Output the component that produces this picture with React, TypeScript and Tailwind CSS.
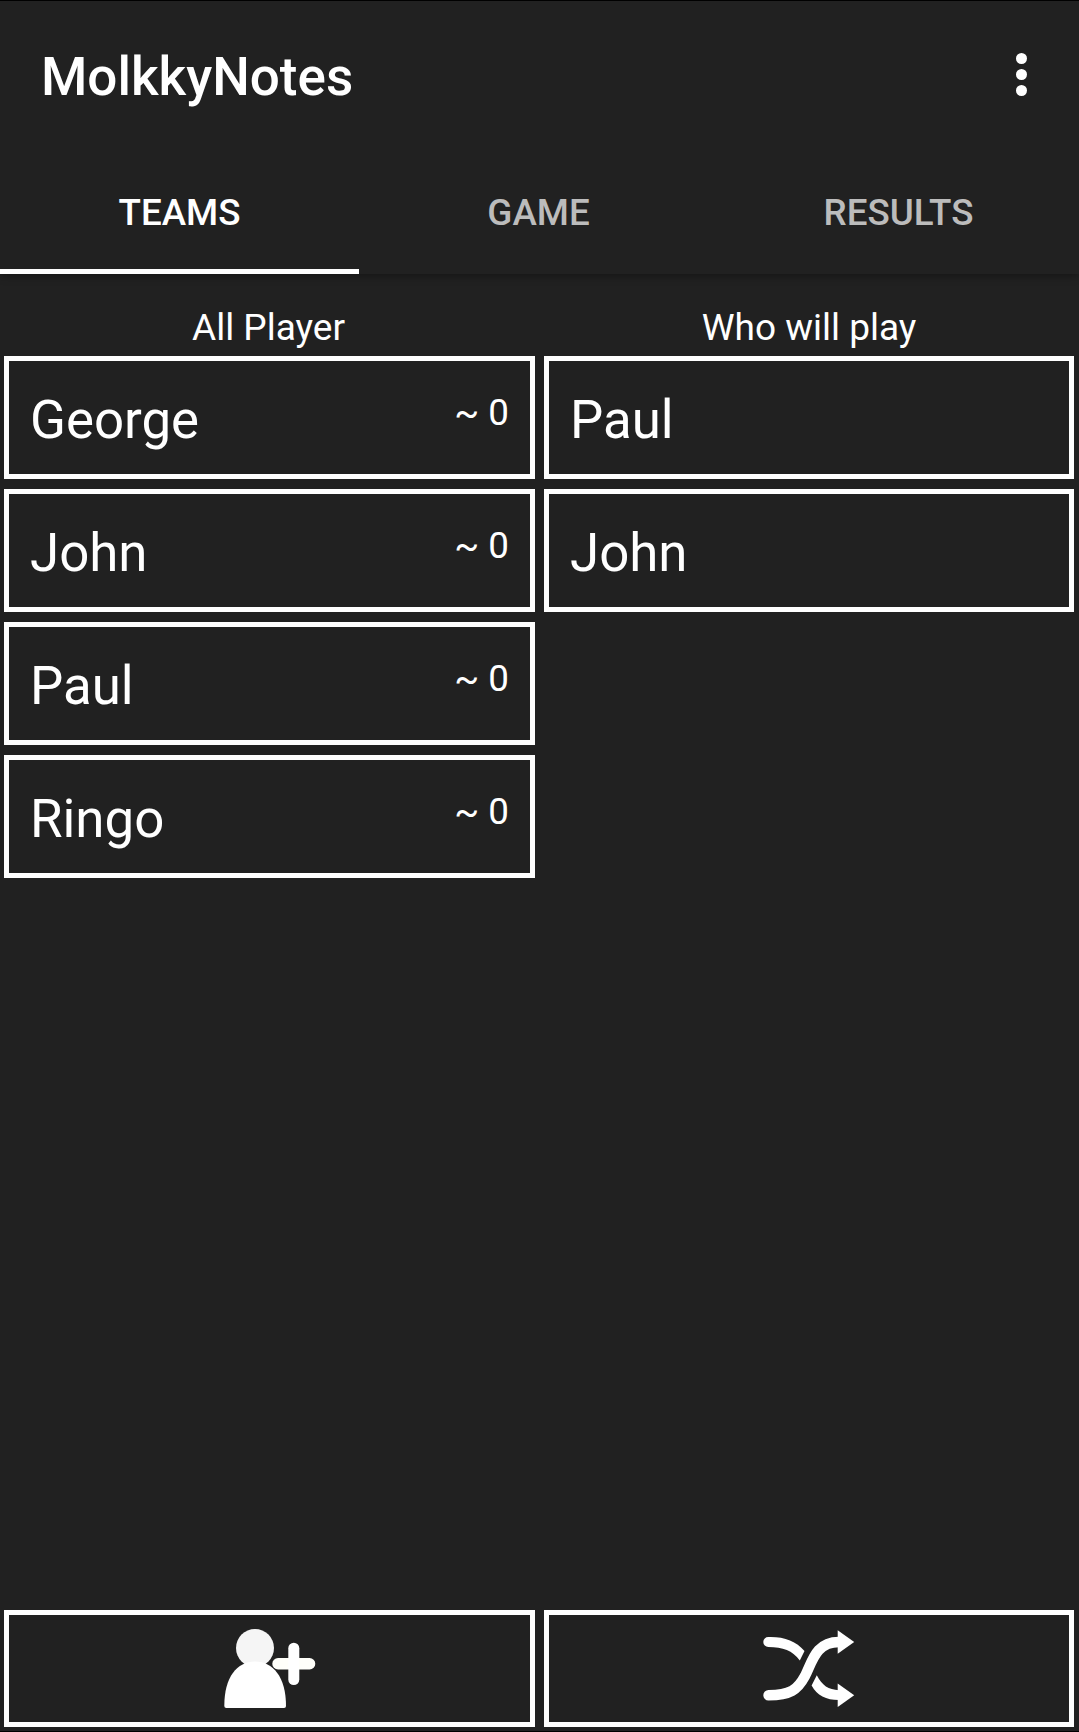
const allPlayers = ["George", "John", "Paul", "Ringo"];
const playing = ["Paul", "John"];
const tabs = ["TEAMS", "GAME", "RESULTS"];

function PlayerCard({ name, score }: { name: string; score?: string }) {
  return (
    <div className="flex h-[123px] items-center justify-between border-[5px] border-white px-[21px]">
      <span className="pt-[4px] text-[52.8px] leading-[60px]">{name}</span>
      {score && <span className="pb-[10px] text-[36.75px] leading-[44px]">{score}</span>}
    </div>
  );
}

function AddPlayerIcon() {
  return (
    <svg width="92" height="80" viewBox="0 0 92 80" aria-hidden="true">
      <circle cx="31" cy="19" r="19" fill="#f5f5f5" />
      <path
        d="M0.3 77C0.3 48 13 32.5 31 32.5S62 48 62 77Q62 79 60 79H2.3Q0.3 79 0.3 77Z"
        fill="#fff"
      />
      <rect x="48.3" y="29" width="43" height="11.5" rx="5.75" fill="#fffffa" />
      <rect x="64.3" y="13.7" width="11" height="42.3" rx="5.5" fill="#fff" />
    </svg>
  );
}

function ShuffleIcon() {
  return (
    <svg width="92" height="80" viewBox="0 0 92 80" fill="#fff" aria-hidden="true">
      <path
        d="M5.5 65.2C27 65.2 34.5 60 42 46C49.5 31 53 12 76 12"
        fill="none"
        stroke="#fff"
        strokeWidth="10.4"
        strokeLinecap="round"
      />
      <path d="M5.3 7C21 6.5 33 11 41.5 21L36.8 30.5C29.5 20.5 20 17 5.3 17A5 5 0 0 1 5.3 7Z" />
      <path d="M53.8 45.3C59 55.5 65.5 59.8 76 60.2V70C63 70 54 65.5 48.6 55.5Z" />
      <path d="M74.7 0.3L91.2 12L74.7 23.7Z" />
      <path d="M74.7 53.5L91.2 65.2L74.7 77Z" />
    </svg>
  );
}

export default function App() {
  return (
    <div className="flex h-[1732px] w-[1079px] flex-col border-y border-black bg-[#212121] font-['Roboto',sans-serif] text-white">
      <header className="h-[273px] shrink-0 bg-[#212121] shadow-[0_2px_8px_rgba(0,0,0,0.35)]">
        <div className="flex h-[152px] items-center justify-between pr-[52px] pl-[40px]">
          <h1 className="pb-px pl-px text-[53px] leading-[60px] font-medium">MolkkyNotes</h1>
          <button aria-label="More options" className="flex flex-col gap-[5px] pb-[6px]">
            <span className="size-[11px] rounded-full bg-white" />
            <span className="size-[11px] rounded-full bg-white" />
            <span className="size-[11px] rounded-full bg-white" />
          </button>
        </div>
        <nav className="grid h-[121px] grid-cols-[359px_359px_361px]">
          {tabs.map((tab, i) => (
            <button
              key={tab}
              className={
                i === 0
                  ? "border-b-[5px] border-white pt-[4px] text-[36.75px] leading-[44px] font-medium"
                  : "border-b-[5px] border-transparent pt-[4px] text-[36.75px] leading-[44px] font-medium text-[#bcbcbc]"
              }
            >
              {tab}
            </button>
          ))}
        </nav>
      </header>

      <main className="grid flex-1 grid-cols-[531px_530px] gap-x-[9px] pt-[32px] pl-[4px]">
        <section>
          <h2 className="h-[50px] pr-[2px] text-center text-[37px] leading-[44px]">All Player</h2>
          <div className="flex flex-col gap-[10px]">
            {allPlayers.map((name) => (
              <PlayerCard key={name} name={name} score="~ 0" />
            ))}
          </div>
        </section>
        <section>
          <h2 className="h-[50px] text-center text-[37px] leading-[44px]">Who will play</h2>
          <div className="flex flex-col gap-[10px]">
            {playing.map((name) => (
              <PlayerCard key={name} name={name} />
            ))}
          </div>
        </section>
      </main>

      <footer className="grid shrink-0 grid-cols-[531px_530px] gap-x-[9px] pb-[4px] pl-[4px]">
        <button aria-label="Add player" className="flex h-[117px] items-center justify-center border-[5px] border-white pl-px">
          <AddPlayerIcon />
        </button>
        <button aria-label="Shuffle teams" className="flex h-[117px] items-center justify-center border-[5px] border-white pt-[2px]">
          <ShuffleIcon />
        </button>
      </footer>
    </div>
  );
}
